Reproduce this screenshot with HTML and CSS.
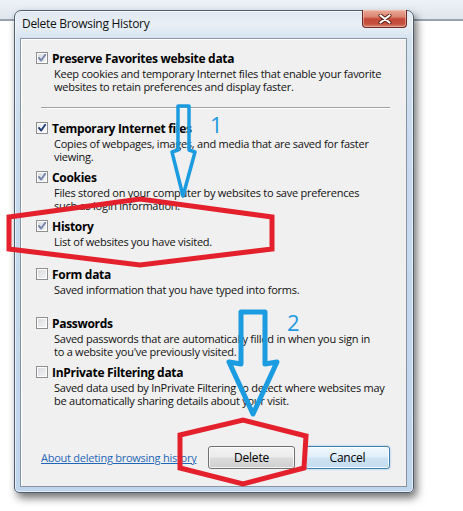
FILE: index.html
```html
<!DOCTYPE html>
<html>
<head>
<meta charset="utf-8">
<link rel="stylesheet" href="styles.css">
</head>
<body>
<div class="desktop">
  <div class="topbar"></div>
  <div class="window">
    <div class="titlebar">
      <span class="caption">Delete Browsing History</span>
      <div class="close">
        <svg width="14" height="10" viewBox="0 0 14 10"><path d="M2.5 1.5 L11.5 8.5 M11.5 1.5 L2.5 8.5" stroke="#5a1c14" stroke-width="4" stroke-linecap="round"/><path d="M2.5 1.5 L11.5 8.5 M11.5 1.5 L2.5 8.5" stroke="#fff" stroke-width="2.2" stroke-linecap="round"/></svg>
      </div>
    </div>
    <div class="panel">
      <div class="item">
        <span class="cb on"><svg viewBox="0 0 10 10"><path d="M2 5 L4.2 7.5 L8.2 1.8" /></svg></span>
        <span class="title">Preserve Favorites website data</span>
        <span class="desc">Keep cookies and temporary Internet files that enable your favorite<br>websites to retain preferences and display faster.</span>
      </div>
      <div class="sep"></div>
      <div class="item">
        <span class="cb on dark"><svg viewBox="0 0 10 10"><path d="M2 5 L4.2 7.5 L8.2 1.8" /></svg></span>
        <span class="title">Temporary Internet files</span>
        <span class="desc">Copies of webpages, images, and media that are saved for faster<br>viewing.</span>
      </div>
      <div class="item">
        <span class="cb on"><svg viewBox="0 0 10 10"><path d="M2 5 L4.2 7.5 L8.2 1.8" /></svg></span>
        <span class="title">Cookies</span>
        <span class="desc">Files stored on your computer by websites to save preferences<br>such as login information.</span>
      </div>
      <div class="item">
        <span class="cb on"><svg viewBox="0 0 10 10"><path d="M2 5 L4.2 7.5 L8.2 1.8" /></svg></span>
        <span class="title">History</span>
        <span class="desc">List of websites you have visited.</span>
      </div>
      <div class="item">
        <span class="cb"></span>
        <span class="title">Form data</span>
        <span class="desc">Saved information that you have typed into forms.</span>
      </div>
      <div class="item">
        <span class="cb"></span>
        <span class="title">Passwords</span>
        <span class="desc">Saved passwords that are automatically filled in when you sign in<br>to a website you've previously visited.</span>
      </div>
      <div class="item">
        <span class="cb"></span>
        <span class="title">InPrivate Filtering data</span>
        <span class="desc">Saved data used by InPrivate Filtering to detect where websites may<br>be automatically sharing details about your visit.</span>
      </div>
      <div class="footer">
        <a class="link" href="#">About deleting browsing history</a>
        <button class="btn delete">Delete</button>
        <button class="btn cancel">Cancel</button>
      </div>
    </div>
  </div>
  <svg class="annot" width="463" height="511" viewBox="0 0 463 511">
    <polygon class="red" points="9,217 140,199 272,217 272,249 140,265 9,249"/>
    <polygon class="red" points="180,435 243,420 306,436 304,468 243,484 180,468"/>
    <polygon class="blue thin" points="178,106 189,106 189,150 195,152 183,196 172,152 178,150"/>
    <polygon class="blue" points="241,312 265,312 265,364 277,362 253,414 229,362 241,364"/>
    <text class="num" x="210" y="133">1</text>
    <text class="num" x="287" y="331">2</text>
  </svg>
</div>
</body>
</html>
```
FILE: styles.css
```css
* { box-sizing: border-box; }
body { margin: 0; background: #fff; font-family: "Open Sans", "Noto Sans", sans-serif; color: #000; }
.desktop { position: relative; width: 463px; height: 511px; overflow: hidden; background: #fff; }
.topbar { height: 21px; background: linear-gradient(#eef2f7, #dfe6ee); border-bottom: 2px solid #9aa2ab; }
.window {
  position: absolute; left: 14px; top: 10px; width: 400px; height: 483px;
  display: flex; flex-direction: column;
  border: 1px solid #4d5e70; border-radius: 7px 7px 5px 5px;
  background: linear-gradient(to bottom, #dfe8f1 0px, #e9eff6 14px, #d6e3f0 28px, #c9dbee 120px, #bfd5ec 100%);
  box-shadow: 3px 5px 8px rgba(0,0,0,.55), inset 0 0 0 1px rgba(255,255,255,.6);
}
.titlebar { height: 27px; flex: none; display: flex; justify-content: space-between; align-items: flex-start; padding: 0 6px 0 7px; }
.caption { font-size: 12px; letter-spacing: -0.3px; line-height: 16px; margin-top: 5px; color: #111; }
.close {
  width: 45px; height: 18px; margin-top: -1px;
  display: flex; align-items: center; justify-content: center;
  border: 1px solid #6a2a22; border-top: none; border-radius: 0 0 4px 4px;
  background: linear-gradient(#e8a996 0%, #db8672 40%, #c6493a 52%, #c4503d 80%, #d9806a 100%);
  box-shadow: inset 0 0 0 1px rgba(255,220,210,.45);
}
.close svg { display: block; }
.panel {
  flex: 1; margin: 0 6px 5px 5px;
  border: 1px solid #8794a3; background: #f0f0f0;
  box-shadow: inset 1px 1px 0 #fff;
  padding: 11px 15px 17px 15px;
  display: flex; flex-direction: column;
}
.item { display: grid; grid-template-columns: 12px 1fr; column-gap: 4px; height: 48.8px; align-content: start; flex: none; }
.item:first-child { height: 49px; }
.cb {
  width: 12px; height: 12px; margin-top: 2px;
  border: 1px solid #8e8f8f;
  background: linear-gradient(135deg, #d6d9de, #f7f7f7);
  box-shadow: inset 0 0 0 1px #fff;
  display: block;
}
.cb svg { display: block; width: 10px; height: 10px; }
.cb svg path { fill: none; stroke: #7486ad; stroke-width: 1.9; stroke-linejoin: round; stroke-linecap: round; }
.cb.dark { background: linear-gradient(135deg, #e8eaee, #ffffff); }
.cb.dark svg path { stroke: #223f78; }
.title { font-weight: 700; font-size: 12px; letter-spacing: -0.3px; line-height: 17px; white-space: nowrap; }
.desc { grid-column: 2; margin-left: 2px; font-size: 11px; letter-spacing: -0.25px; line-height: 13px; white-space: nowrap; color: #111; }
.sep { height: 2px; border-top: 1px solid #a0a0a0; border-bottom: 1px solid #fff; margin: 8px 1px 11px 5px; flex: none; }
.footer { margin-top: auto; display: flex; align-items: center; }
.link { margin-left: 5px; font-size: 11px; letter-spacing: -0.25px; color: #1f66b8; text-decoration: underline; white-space: nowrap; }
.btn {
  height: 23px; border: 1px solid #707070; border-radius: 3px;
  font-family: inherit; font-size: 12px; letter-spacing: -0.2px; color: #000; padding: 0;
  background: linear-gradient(#f3f3f3 0%, #ebebeb 48%, #dcdcdc 52%, #cfcfcf 100%);
  box-shadow: inset 0 0 0 1px rgba(255,255,255,.75);
}
.delete { width: 87px; margin-left: auto; }
.cancel {
  width: 85px; margin-left: 10px; margin-right: 1px;
  border-color: #3c7fb1;
  background: linear-gradient(#f1f8fd 0%, #e0eef9 48%, #cfe4f4 52%, #c3dcf0 100%);
  box-shadow: inset 0 0 0 1px rgba(255,255,255,.8), 0 0 2px rgba(60,140,220,.6);
}
.annot { position: absolute; left: 0; top: 0; pointer-events: none; }
.red { fill: none; stroke: #e3202c; stroke-width: 5; stroke-linejoin: miter; }
.blue { fill: none; stroke: #1b9be0; stroke-width: 5; stroke-linejoin: round; }
.blue.thin { stroke-width: 3.5; }
.num { fill: #1b9be0; font-family: "Open Sans", "Noto Sans", sans-serif; font-size: 22px; }
```
